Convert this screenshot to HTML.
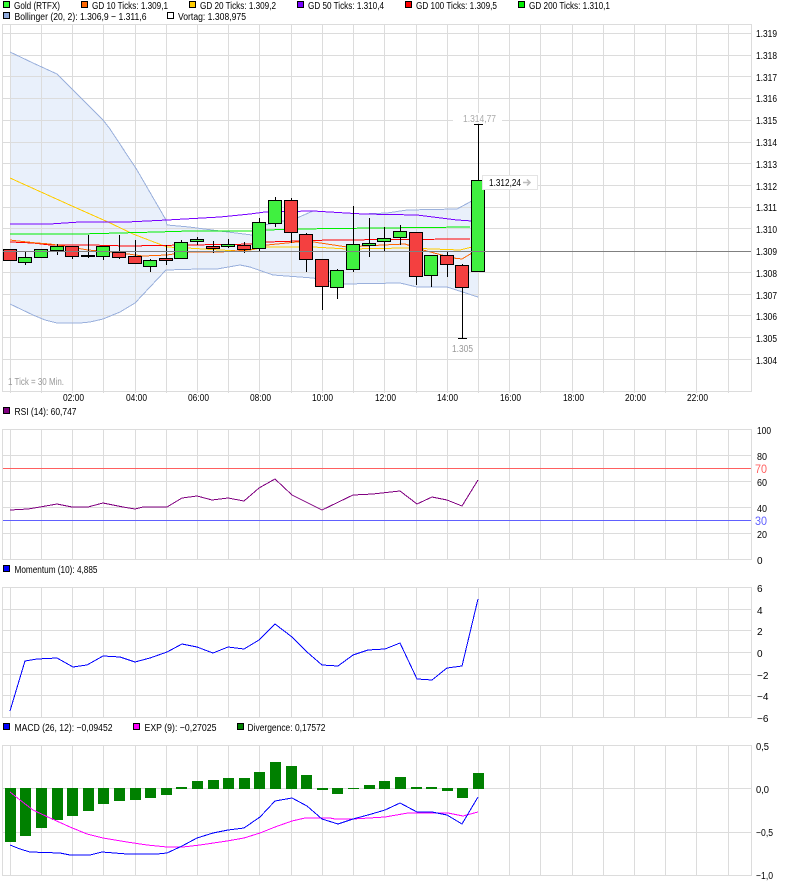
<!DOCTYPE html>
<html>
<head>
<meta charset="utf-8">
<title>Gold (RTFX)</title>
<style>
html,body{margin:0;padding:0;background:#fff}
svg{display:block}
text{font-family:"Liberation Sans",Arial,sans-serif;font-size:10px;fill:#000}
.g{fill:none;stroke:#dcdcdc;stroke-width:1;shape-rendering:crispEdges}
.l{fill:none;stroke-width:1;shape-rendering:crispEdges}
.sw{stroke:#000;stroke-width:1;shape-rendering:crispEdges}
.w{stroke:#000;stroke-width:1;fill:none;shape-rendering:crispEdges}
.r{fill:#f44040;stroke:#000;shape-rendering:crispEdges}
.c{fill:#40f040;stroke:#000;shape-rendering:crispEdges}
.b{fill:#008000;shape-rendering:crispEdges}
</style>
</head>
<body>
<svg width="792" height="885" viewBox="0 0 792 885" xmlns="http://www.w3.org/2000/svg">
<!-- legend -->
<rect class="sw" x="3.5" y="1.5" width="6" height="6" fill="#33ff33"/>
<text x="14" y="9" textLength="46" lengthAdjust="spacingAndGlyphs">Gold (RTFX)</text>
<rect class="sw" x="81.5" y="1.5" width="6" height="6" fill="#ff6600"/>
<text x="92" y="9" textLength="76" lengthAdjust="spacingAndGlyphs">GD 10 Ticks: 1.309,1</text>
<rect class="sw" x="189.5" y="1.5" width="6" height="6" fill="#ffcc00"/>
<text x="200" y="9" textLength="76" lengthAdjust="spacingAndGlyphs">GD 20 Ticks: 1.309,2</text>
<rect class="sw" x="297.5" y="1.5" width="6" height="6" fill="#7700ff"/>
<text x="308" y="9" textLength="76" lengthAdjust="spacingAndGlyphs">GD 50 Ticks: 1.310,4</text>
<rect class="sw" x="405.5" y="1.5" width="6" height="6" fill="#ff0000"/>
<text x="416" y="9" textLength="81" lengthAdjust="spacingAndGlyphs">GD 100 Ticks: 1.309,5</text>
<rect class="sw" x="518.5" y="1.5" width="6" height="6" fill="#00ee00"/>
<text x="529" y="9" textLength="81" lengthAdjust="spacingAndGlyphs">GD 200 Ticks: 1.310,1</text>
<rect class="sw" x="3.5" y="12.5" width="6" height="6" fill="#8faadc"/>
<text x="14.500" y="20" textLength="132" lengthAdjust="spacingAndGlyphs">Bollinger (20, 2): 1.306,9 − 1.311,6</text>
<rect class="sw" x="167.5" y="12.5" width="6" height="6" fill="#fff"/>
<text x="178" y="20" textLength="68" lengthAdjust="spacingAndGlyphs">Vortag: 1.308,975</text>

<!-- main: band fill -->
<polygon fill="#e9f0fb" points="10,52 33,63 57,74 103,120 110,129 137,170 166,220 167,225 189,227 220,231 252,235 265,225 297,218 313,211 363,214 387,213 407,210 457,209 470,202 478,197 478,297 447,287 417,287 400,283 343,284 313,278 273,275 250,267 240,265 217,269 200,269 166,270 150,287 135,303 120,312 103,319 90,322 80,323 57,323 45,320 33,315 10,304"/>

<!-- main grid -->
<rect class="g" x="2.5" y="24.5" width="749" height="367"/>
<path class="g" d="M3 33.500H751M3 55.500H751M3 76.500H751M3 98.500H751M3 120.500H751M3 142.500H751M3 163.500H751M3 185.500H751M3 207.500H751M3 228.500H751M3 272.500H751M3 294.500H751M3 315.500H751M3 337.500H751M3 359.500H751"/>
<path class="g" d="M10.500 25V393M41.500 25V393M72.500 25V393M103.500 25V393M135.500 25V393M166.500 25V393M197.500 25V393M228.500 25V393M259.500 25V393M291.500 25V393M322.500 25V393M353.500 25V393M384.500 25V393M416.500 25V393M447.500 25V393M478.500 25V393M509.500 25V393M540.500 25V393M572.500 25V393M603.500 25V393M634.500 25V393M665.500 25V393M696.500 25V393M728.500 25V393"/>

<!-- bollinger lines -->
<polyline class="l" stroke="#9ab0dc" points="10,52 33,63 57,74 103,120 110,129 137,170 166,220 167,225 189,227 220,231 252,235 265,225 297,218 313,211 363,214 387,213 407,210 457,209 470,202 478,197"/>
<polyline class="l" stroke="#9ab0dc" points="10,304 33,315 45,320 57,323 80,323 90,322 103,319 120,312 135,303 150,287 166,270 200,269 217,269 240,265 250,267 273,275 313,278 343,284 400,283 417,287 447,287 478,297"/>

<!-- moving averages -->
<polyline class="l" stroke="#ffcc00" points="10,178 72,206 108,222 133,234 167,247 187,248 220,250 240,251 250,250 267,247 313,247 347,249 407,248 460,250 472,247"/>
<polyline class="l" stroke="#7700ff" points="10,224 50,224 80,222 127,222 167,220 220,217 250,214 265,212 313,211 363,214 417,215 457,220 472,221"/>
<polyline class="l" stroke="#00ee00" points="10,234 80,234 157,232 190,231 259,231 267,230 297,229 377,228 470,227"/>
<polyline class="l" stroke="#ff0000" points="10,242 33,243 50,245 90,245 127,246 187,245 259,244 267,242 330,240 470,239"/>
<polyline class="l" stroke="#ff6600" points="10,240 18,241 37,243 50,244 70,247 88,250 113,252 143,256 167,255 188,252 220,252 250,250 267,245 307,241 347,247 383,245 405,244 423,250 453,258 462,259 472,253"/>

<!-- candles -->
<rect class="r" x="3.500" y="249.500" width="13" height="11"/>
<path class="w" d="M25.500 252V265"/><rect class="c" x="18.500" y="257.500" width="13" height="5"/>
<rect class="c" x="34.500" y="249.500" width="13" height="8"/>
<path class="w" d="M57.500 244V255"/><rect class="c" x="50.500" y="246.500" width="13" height="4"/>
<path class="w" d="M72.500 246V259"/><rect class="r" x="65.500" y="246.500" width="13" height="10"/>
<path class="w" d="M88.500 235V258"/><rect class="c" x="81.500" y="255.500" width="13" height="1" style="fill:#000"/>
<path class="w" d="M103.500 246V260"/><rect class="c" x="96.500" y="246.500" width="13" height="10"/>
<path class="w" d="M119.500 235V259"/><rect class="r" x="112.500" y="252.500" width="13" height="5"/>
<path class="w" d="M135.500 240V256"/><rect class="r" x="128.500" y="256.500" width="13" height="7"/>
<path class="w" d="M150.500 259V272"/><rect class="c" x="143.500" y="260.500" width="13" height="6"/>
<path class="w" d="M166.500 245V265"/><rect class="r" x="159.500" y="258.500" width="13" height="2"/>
<path class="w" d="M181.500 240V258"/><rect class="c" x="174.500" y="242.500" width="13" height="16"/>
<path class="w" d="M197.500 237V245"/><rect class="c" x="190.500" y="239.500" width="13" height="2"/>
<path class="w" d="M213.500 241V253"/><rect class="r" x="206.500" y="246.500" width="13" height="2"/>
<path class="w" d="M228.500 239V248"/><rect class="c" x="221.500" y="244.500" width="13" height="2"/>
<path class="w" d="M244.500 242V253"/><rect class="r" x="237.500" y="245.500" width="13" height="4"/>
<path class="w" d="M259.500 218V252"/><rect class="c" x="252.500" y="222.500" width="13" height="26"/>
<path class="w" d="M275.500 197V227"/><rect class="c" x="268.500" y="200.500" width="13" height="23"/>
<path class="w" d="M291.500 198V243"/><rect class="r" x="284.500" y="200.500" width="13" height="32"/>
<path class="w" d="M306.500 233V272"/><rect class="r" x="299.500" y="234.500" width="13" height="25"/>
<path class="w" d="M322.500 259V310"/><rect class="r" x="315.500" y="259.500" width="13" height="27"/>
<path class="w" d="M337.500 269V299"/><rect class="c" x="330.500" y="270.500" width="13" height="17"/>
<path class="w" d="M353.500 206V272"/><rect class="c" x="346.500" y="244.500" width="13" height="25"/>
<path class="w" d="M369.500 218V257"/><rect class="c" x="362.500" y="243.500" width="13" height="2"/>
<path class="w" d="M384.500 227V251"/><rect class="c" x="377.500" y="238.500" width="13" height="3"/>
<path class="w" d="M400.500 225V245"/><rect class="c" x="393.500" y="231.500" width="13" height="6"/>
<path class="w" d="M416.500 232V285"/><rect class="r" x="409.500" y="232.500" width="13" height="44"/>
<path class="w" d="M431.500 255V287"/><rect class="c" x="424.500" y="255.500" width="13" height="20"/>
<path class="w" d="M447.500 251V277"/><rect class="r" x="440.500" y="255.500" width="13" height="9"/>
<path class="w" d="M462.500 264V338M458 338.500H467"/><rect class="r" x="455.500" y="265.500" width="13" height="22"/>
<path class="w" d="M478.500 124V181M474 124.500H483"/><rect class="c" x="471.500" y="180.500" width="13" height="91"/>

<!-- previous close -->
<path d="M3 251.500H751" stroke="#808080" stroke-width="1" fill="none" shape-rendering="crispEdges"/>

<!-- price tags -->
<rect x="482.500" y="175.500" width="55" height="14" fill="#fff" stroke="#e4e4e4" shape-rendering="crispEdges"/>
<text x="489" y="186" textLength="32" lengthAdjust="spacingAndGlyphs">1.312,24</text>
<path d="M523 182.500H530M527 179.500L530 182.500L527 185.500" fill="none" stroke="#bbb" stroke-width="1.500"/>
<rect x="453" y="113" width="49" height="10" fill="#fff"/>
<text x="463" y="122" textLength="33" lengthAdjust="spacingAndGlyphs" style="fill:#aaa">1.314,77</text>
<text x="452" y="352" textLength="21" lengthAdjust="spacingAndGlyphs" style="fill:#999">1.305</text>
<text x="8" y="385" textLength="56" lengthAdjust="spacingAndGlyphs" style="fill:#999">1 Tick = 30 Min.</text>

<!-- main axis labels -->
<text x="756" y="37" textLength="21" lengthAdjust="spacingAndGlyphs">1.319</text>
<text x="756" y="59" textLength="21" lengthAdjust="spacingAndGlyphs">1.318</text>
<text x="756" y="81" textLength="21" lengthAdjust="spacingAndGlyphs">1.317</text>
<text x="756" y="102" textLength="21" lengthAdjust="spacingAndGlyphs">1.316</text>
<text x="756" y="124" textLength="21" lengthAdjust="spacingAndGlyphs">1.315</text>
<text x="756" y="146" textLength="21" lengthAdjust="spacingAndGlyphs">1.314</text>
<text x="756" y="168" textLength="21" lengthAdjust="spacingAndGlyphs">1.313</text>
<text x="756" y="190" textLength="21" lengthAdjust="spacingAndGlyphs">1.312</text>
<text x="756" y="211" textLength="21" lengthAdjust="spacingAndGlyphs">1.311</text>
<text x="756" y="233" textLength="21" lengthAdjust="spacingAndGlyphs">1.310</text>
<text x="756" y="255" textLength="21" lengthAdjust="spacingAndGlyphs">1.309</text>
<text x="756" y="277" textLength="21" lengthAdjust="spacingAndGlyphs">1.308</text>
<text x="756" y="299" textLength="21" lengthAdjust="spacingAndGlyphs">1.307</text>
<text x="756" y="320" textLength="21" lengthAdjust="spacingAndGlyphs">1.306</text>
<text x="756" y="342" textLength="21" lengthAdjust="spacingAndGlyphs">1.305</text>
<text x="756" y="364" textLength="21" lengthAdjust="spacingAndGlyphs">1.304</text>
<text x="63" y="401" textLength="21" lengthAdjust="spacingAndGlyphs">02:00</text>
<text x="126" y="401" textLength="21" lengthAdjust="spacingAndGlyphs">04:00</text>
<text x="188" y="401" textLength="21" lengthAdjust="spacingAndGlyphs">06:00</text>
<text x="250" y="401" textLength="21" lengthAdjust="spacingAndGlyphs">08:00</text>
<text x="312" y="401" textLength="21" lengthAdjust="spacingAndGlyphs">10:00</text>
<text x="375" y="401" textLength="21" lengthAdjust="spacingAndGlyphs">12:00</text>
<text x="437" y="401" textLength="21" lengthAdjust="spacingAndGlyphs">14:00</text>
<text x="500" y="401" textLength="21" lengthAdjust="spacingAndGlyphs">16:00</text>
<text x="563" y="401" textLength="21" lengthAdjust="spacingAndGlyphs">18:00</text>
<text x="625" y="401" textLength="21" lengthAdjust="spacingAndGlyphs">20:00</text>
<text x="687" y="401" textLength="21" lengthAdjust="spacingAndGlyphs">22:00</text>

<!-- RSI -->
<rect class="sw" x="3.500" y="407.500" width="6" height="6" fill="#800080"/>
<text x="14.500" y="415" textLength="62" lengthAdjust="spacingAndGlyphs">RSI (14): 60,747</text>
<rect class="g" x="2.500" y="429.500" width="749" height="130"/>
<path class="g" d="M3 455.500H751M3 481.500H751M3 507.500H751M3 533.500H751"/>
<path class="g" d="M10.500 430V559M41.500 430V559M72.500 430V559M103.500 430V559M135.500 430V559M166.500 430V559M197.500 430V559M228.500 430V559M259.500 430V559M291.500 430V559M322.500 430V559M353.500 430V559M384.500 430V559M416.500 430V559M447.500 430V559M478.500 430V559M509.500 430V559M540.500 430V559M572.500 430V559M603.500 430V559M634.500 430V559M665.500 430V559M696.500 430V559M728.500 430V559"/>
<path class="l" stroke="#ff6060" d="M3 468.500H751"/>
<path class="l" stroke="#6060ff" d="M3 520.500H751"/>
<polyline class="l" stroke="#800080" points="10,510 28,509 40,507 57,504 72,507 88,507 103,503 123,507 135,509 143,507 167,507 182,498 197,496 212,500 228,498 244,501 259,488 275,479 292,495 322,510 353,495 373,494 400,491 417,504 432,497 447,500 462,506 478,480"/>
<text x="757" y="434" textLength="14" lengthAdjust="spacingAndGlyphs">100</text>
<text x="757" y="460" textLength="10" lengthAdjust="spacingAndGlyphs">80</text>
<text x="755" y="473" textLength="12" lengthAdjust="spacingAndGlyphs" style="fill:#ff6060;font-size:12px">70</text>
<text x="757" y="486" textLength="10" lengthAdjust="spacingAndGlyphs">60</text>
<text x="757" y="512" textLength="10" lengthAdjust="spacingAndGlyphs">40</text>
<text x="755" y="525" textLength="12" lengthAdjust="spacingAndGlyphs" style="fill:#6060ff;font-size:12px">30</text>
<text x="757" y="538" textLength="10" lengthAdjust="spacingAndGlyphs">20</text>
<text x="757" y="564">0</text>

<!-- Momentum -->
<rect class="sw" x="3.500" y="565.500" width="6" height="6" fill="#0000ff"/>
<text x="14.500" y="573" textLength="83" lengthAdjust="spacingAndGlyphs">Momentum (10): 4,885</text>
<rect class="g" x="2.500" y="587.500" width="749" height="130"/>
<path class="g" d="M3 609.500H751M3 630.500H751M3 652.500H751M3 674.500H751M3 695.500H751"/>
<path class="g" d="M10.500 588V717M41.500 588V717M72.500 588V717M103.500 588V717M135.500 588V717M166.500 588V717M197.500 588V717M228.500 588V717M259.500 588V717M291.500 588V717M322.500 588V717M353.500 588V717M384.500 588V717M416.500 588V717M447.500 588V717M478.500 588V717M509.500 588V717M540.500 588V717M572.500 588V717M603.500 588V717M634.500 588V717M665.500 588V717M696.500 588V717M728.500 588V717"/>
<polyline class="l" stroke="#0000ff" points="10,711 25,661 37,659 57,658 73,667 87,665 103,656 120,657 135,662 150,658 167,652 182,644 197,647 213,653 228,647 244,649 259,640 275,624 292,637 307,652 322,665 338,666 353,655 368,650 385,649 400,643 417,679 432,680 447,668 462,666 478,599"/>
<text x="757" y="592">6</text>
<text x="757" y="614">4</text>
<text x="757" y="635">2</text>
<text x="757" y="657">0</text>
<text x="757" y="679">−2</text>
<text x="757" y="700">−4</text>
<text x="757" y="722">−6</text>

<!-- MACD -->
<rect class="sw" x="3.500" y="723.500" width="6" height="6" fill="#0000ff"/>
<text x="14.500" y="731" textLength="98" lengthAdjust="spacingAndGlyphs">MACD (26, 12): −0,09452</text>
<rect class="sw" x="133.500" y="723.500" width="6" height="6" fill="#ff00ff"/>
<text x="144.500" y="731" textLength="72" lengthAdjust="spacingAndGlyphs">EXP (9): −0,27025</text>
<rect class="sw" x="237.500" y="723.500" width="6" height="6" fill="#008000"/>
<text x="247.500" y="731" textLength="78" lengthAdjust="spacingAndGlyphs">Divergence: 0,17572</text>
<rect class="g" x="2.500" y="745.500" width="749" height="130"/>
<path class="g" d="M3 788.500H751M3 832.500H751"/>
<path class="g" d="M10.500 746V875M41.500 746V875M72.500 746V875M103.500 746V875M135.500 746V875M166.500 746V875M197.500 746V875M228.500 746V875M259.500 746V875M291.500 746V875M322.500 746V875M353.500 746V875M384.500 746V875M416.500 746V875M447.500 746V875M478.500 746V875M509.500 746V875M540.500 746V875M572.500 746V875M603.500 746V875M634.500 746V875M665.500 746V875M696.500 746V875M728.500 746V875"/>
<rect class="b" x="5" y="788" width="11" height="54"/>
<rect class="b" x="20" y="788" width="11" height="48"/>
<rect class="b" x="36" y="788" width="11" height="40"/>
<rect class="b" x="52" y="788" width="11" height="32"/>
<rect class="b" x="67" y="788" width="11" height="28"/>
<rect class="b" x="83" y="788" width="11" height="23"/>
<rect class="b" x="98" y="788" width="11" height="16"/>
<rect class="b" x="114" y="788" width="11" height="13"/>
<rect class="b" x="130" y="788" width="11" height="12"/>
<rect class="b" x="145" y="788" width="11" height="10"/>
<rect class="b" x="161" y="788" width="11" height="7"/>
<rect class="b" x="176" y="787" width="11" height="2"/>
<rect class="b" x="192" y="781" width="11" height="8"/>
<rect class="b" x="208" y="780" width="11" height="9"/>
<rect class="b" x="223" y="778" width="11" height="11"/>
<rect class="b" x="239" y="778" width="11" height="11"/>
<rect class="b" x="254" y="772" width="11" height="17"/>
<rect class="b" x="270" y="762" width="11" height="27"/>
<rect class="b" x="286" y="766" width="11" height="23"/>
<rect class="b" x="301" y="775" width="11" height="14"/>
<rect class="b" x="317" y="788" width="11" height="2"/>
<rect class="b" x="332" y="788" width="11" height="6"/>
<rect class="b" x="348" y="788" width="11" height="1"/>
<rect class="b" x="364" y="785" width="11" height="4"/>
<rect class="b" x="379" y="781" width="11" height="8"/>
<rect class="b" x="395" y="777" width="11" height="12"/>
<rect class="b" x="411" y="787" width="11" height="2"/>
<rect class="b" x="426" y="787" width="11" height="2"/>
<rect class="b" x="442" y="788" width="11" height="3"/>
<rect class="b" x="457" y="788" width="11" height="10"/>
<rect class="b" x="473" y="773" width="11" height="16"/>
<polyline class="l" stroke="#ff00ff" points="10,792 20,800 33,810 50,818 70,827 87,834 103,838 127,842 147,845 167,847 183,847 200,845 227,841 244,838 260,833 275,827 292,821 305,818 330,818 335,819 353,819 385,817 408,813 448,813 463,816 478,812"/>
<polyline class="l" stroke="#0000ff" points="10,845 20,849 30,852 60,853 70,855 90,855 102,852 127,854 157,854 167,853 182,846 197,838 213,833 228,830 244,828 260,817 275,801 292,798 307,806 322,819 338,824 353,819 368,815 385,810 400,803 417,812 432,812 447,815 462,824 478,797"/>
<text x="756" y="750" textLength="13" lengthAdjust="spacingAndGlyphs">0,5</text>
<text x="756" y="793" textLength="13" lengthAdjust="spacingAndGlyphs">0,0</text>
<text x="756" y="836" textLength="17" lengthAdjust="spacingAndGlyphs">−0,5</text>
<text x="756" y="879" textLength="17" lengthAdjust="spacingAndGlyphs">−1,0</text>
</svg>
</body>
</html>
